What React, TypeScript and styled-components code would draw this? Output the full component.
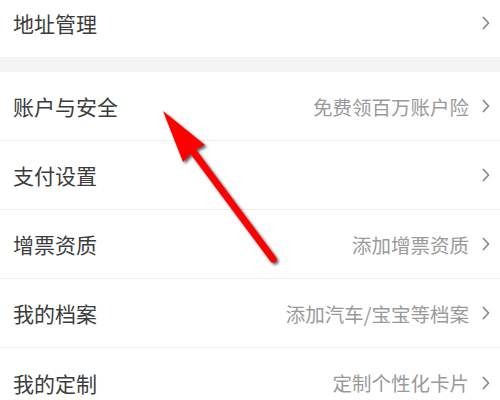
import styled, { createGlobalStyle } from "styled-components";

const GlobalStyle = createGlobalStyle`
  html, body {
    margin: 0;
    padding: 0;
    background: #ffffff;
  }
  body {
    font-family: "Noto Sans CJK SC", "Noto Sans", sans-serif;
  }
`;

type Item = { title: string; hint?: string };

const groups: Item[][] = [
  [{ title: "地址管理" }],
  [
    { title: "账户与安全", hint: "免费领百万账户险" },
    { title: "支付设置" },
    { title: "增票资质", hint: "添加增票资质" },
    { title: "我的档案", hint: "添加汽车/宝宝等档案" },
    { title: "我的定制", hint: "定制个性化卡片" },
  ],
];

const Chevron = () => (
  <svg width="8" height="14" viewBox="0 0 8 14">
    <polyline
      points="1.5,1.5 6.5,7 1.5,12.5"
      fill="none"
      stroke="#8a8a8a"
      strokeWidth="1.7"
      strokeLinecap="round"
      strokeLinejoin="round"
    />
  </svg>
);

const Arrow = () => (
  <ArrowLayer viewBox="0 0 500 400" width="500" height="400">
    <line
      x1="192"
      y1="150"
      x2="273"
      y2="259"
      stroke="#ff0000"
      strokeWidth="7"
      strokeLinecap="round"
    />
    <polygon points="163,111 205,145 194,150 183,162" fill="#ff0000" />
  </ArrowLayer>
);

const App = () => {
  return (
    <Page>
      <GlobalStyle />
      {groups.map((group, gi) => (
        <Group key={gi} $first={gi === 0}>
          {group.map((item) => (
            <Row key={item.title}>
              <Title>{item.title}</Title>
              <Right>
                {item.hint && <Hint>{item.hint}</Hint>}
                <Chevron />
              </Right>
            </Row>
          ))}
        </Group>
      ))}
      <Arrow />
    </Page>
  );
};

export default App;

const Page = styled.div`
  position: relative;
  width: 500px;
  height: 400px;
  overflow: hidden;
  background: #f2f3f5;
`;

const Group = styled.div<{ $first: boolean }>`
  background: #ffffff;
  margin-top: ${(p) => (p.$first ? "-12px" : "15px")};
`;

const Row = styled.div`
  height: 68px;
  display: flex;
  align-items: center;
  justify-content: space-between;
  padding: 0 10px 0 13px;
  border-bottom: 1px solid #ededed;
  box-sizing: content-box;

  &:last-child {
    border-bottom: none;
    height: 69px;
  }
`;

const Title = styled.span`
  font-size: 21px;
  color: #3c3c3c;
`;

const Right = styled.div`
  display: flex;
  align-items: center;
  gap: 13px;
`;

const Hint = styled.span`
  font-size: 19.5px;
  color: #9a9a9a;
`;

const ArrowLayer = styled.svg`
  position: absolute;
  left: 0;
  top: 0;
  pointer-events: none;
  filter: drop-shadow(2px 2px 1.5px rgba(0, 0, 0, 0.65));
`;
